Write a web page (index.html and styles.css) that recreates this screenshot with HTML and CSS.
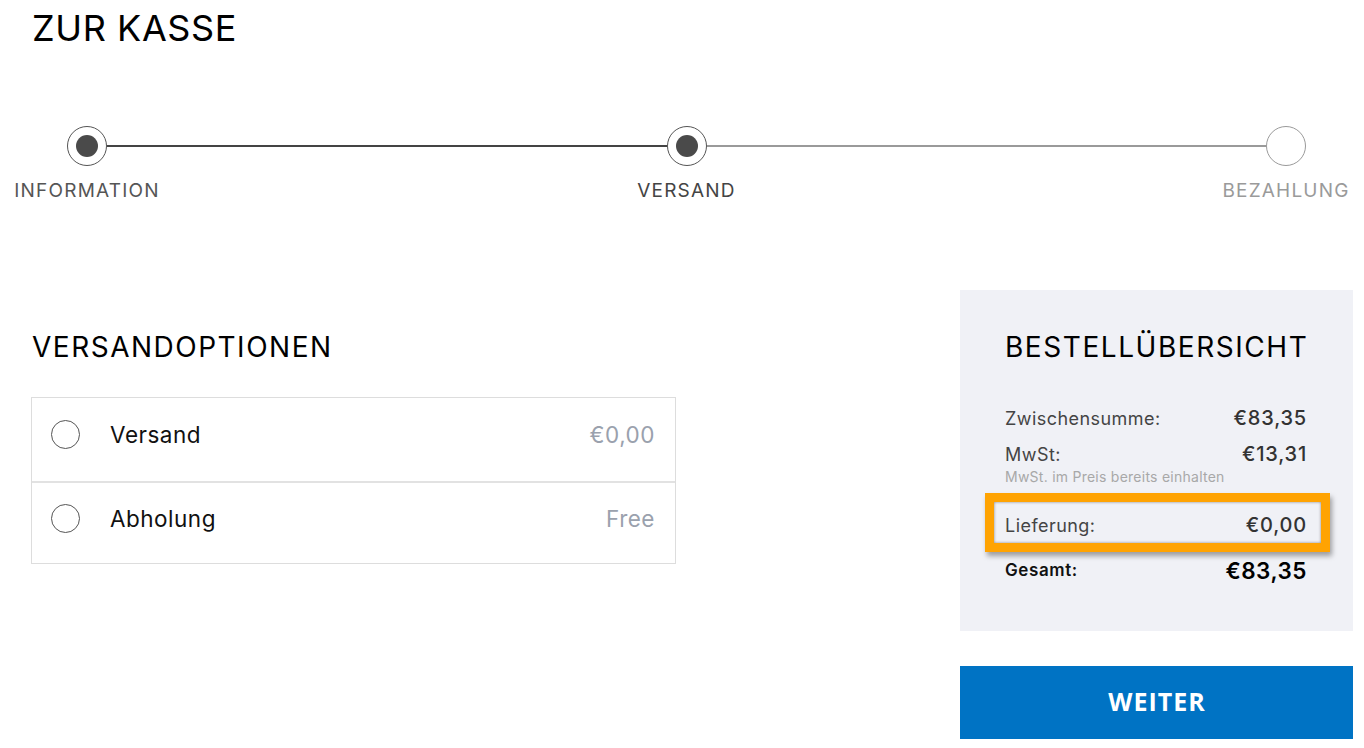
FILE: index.html
```html
<!DOCTYPE html>
<html lang="de">
<head>
<meta charset="utf-8">
<title>Zur Kasse</title>
<link rel="stylesheet" href="styles.css">
</head>
<body>
<h1 class="page-title">ZUR KASSE</h1>

<div class="stepper">
  <div class="track">
    <span class="dot done"></span>
    <span class="line dark"></span>
    <span class="dot done"></span>
    <span class="line light"></span>
    <span class="dot todo"></span>
  </div>
  <div class="labels">
    <span class="lbl">INFORMATION</span>
    <span class="lbl cur">VERSAND</span>
    <span class="lbl todo">BEZAHLUNG</span>
  </div>
</div>

<div class="main">
  <section class="options">
    <h2 class="section-title">VERSANDOPTIONEN</h2>
    <div class="opt-list">
      <div class="opt">
        <span class="radio"></span>
        <span class="opt-name">Versand</span>
        <span class="opt-price">€0,00</span>
      </div>
      <div class="opt">
        <span class="radio"></span>
        <span class="opt-name">Abholung</span>
        <span class="opt-price">Free</span>
      </div>
    </div>
  </section>

  <aside class="side">
    <div class="summary">
      <h2 class="summary-title">BESTELLÜBERSICHT</h2>
      <div class="rows">
        <div class="row"><span class="k">Zwischensumme:</span><span class="v">€83,35</span></div>
        <div class="row r2"><span class="k">MwSt:</span><span class="v">€13,31</span></div>
        <div class="note">MwSt. im Preis bereits einhalten</div>
        <div class="row r3 highlight"><span class="k">Lieferung:</span><span class="v">€0,00</span></div>
        <div class="row r4 total"><span class="k">Gesamt:</span><span class="v">€83,35</span></div>
      </div>
    </div>
    <button class="btn">WEITER</button>
  </aside>
</div>
</body>
</html>
```

FILE: styles.css
```css
* { box-sizing: border-box; }
html, body { margin: 0; padding: 0; background: #fff; }
body {
  font-family: "Inter", "Noto Sans", sans-serif;
  color: #111;
  width: 1364px;
  overflow: hidden;
}

.page-title {
  margin: 0;
  padding: 6px 0 0 32px;
  font-size: 36px;
  line-height: 44px;
  font-weight: 400;
  letter-spacing: 0.6px;
  color: #000;
}

/* stepper */
.stepper {
  margin: 76px 5px 0 14px;
}
.track {
  display: flex;
  align-items: center;
  padding: 0 53px;
}
.dot {
  width: 40px;
  height: 40px;
  flex: none;
  border: 1.5px solid #555;
  border-radius: 50%;
  display: grid;
  place-items: center;
  background: #fff;
}
.dot.done::after {
  content: "";
  width: 22px;
  height: 22px;
  border-radius: 50%;
  background: #4a4a4a;
}
.dot.todo { border-color: #9a9a9a; }
.line { flex: 1; height: 2px; }
.line.dark { background: #444; }
.line.light { background: #9a9a9a; }

.labels {
  display: flex;
  justify-content: space-between;
  margin-top: 13px;
}
.lbl {
  width: 146px;
  text-align: center;
  font-size: 19px;
  line-height: 24px;
  letter-spacing: 1.2px;
  color: #555;
}
.lbl.cur { color: #444; }
.lbl.todo { color: #9a9a9a; }

/* main */
.main {
  display: flex;
  margin-top: 87px;
}
.options {
  width: 645px;
  margin-left: 31px;
  padding-top: 40px;
}
.section-title {
  margin: 0 0 0 1px;
  font-size: 28px;
  line-height: 34px;
  font-weight: 400;
  letter-spacing: 1.5px;
  color: #000;
}
.opt-list {
  margin-top: 33px;
  border: 1px solid #ddd;
}
.opt {
  display: flex;
  align-items: center;
  height: 83px;
  padding: 0 20px 10px 19px;
}
.opt + .opt { border-top: 2px solid #e2e2e2; height: 82px; }
.radio {
  width: 29px;
  height: 29px;
  flex: none;
  border: 1.5px solid #555;
  border-radius: 50%;
}
.opt-name {
  margin-left: 30px;
  font-size: 22.5px;
  letter-spacing: 0.5px;
  color: #111;
  flex: 1;
}
.opt-price {
  font-size: 22.5px;
  letter-spacing: 0.5px;
  color: #9aa1ad;
}

/* summary */
.side {
  width: 393px;
  margin-left: auto;
  margin-right: 11px;
}
.summary {
  background: #f0f1f6;
  padding: 40px 46px 48px 45px;
}
.summary-title {
  margin: 0;
  font-size: 28px;
  line-height: 34px;
  font-weight: 400;
  letter-spacing: 1.55px;
  color: #000;
}
.rows { margin-top: 41px; }
.row {
  display: flex;
  justify-content: space-between;
  align-items: center;
  height: 26px;
}
.row .k {
  font-size: 18px;
  letter-spacing: 0.45px;
  color: #444;
}
.row .v {
  font-size: 20px;
  font-weight: 500;
  letter-spacing: 0.8px;
  color: #333;
}
.r2 { margin-top: 10px; }
.note {
  margin-top: 2px;
  font-size: 14px;
  line-height: 16px;
  letter-spacing: 0.25px;
  color: #a8a8a8;
}
.r3 { margin-top: 27px; }
.highlight { position: relative; }
.highlight::after {
  content: "";
  position: absolute;
  top: -19px;
  bottom: -14px;
  left: -20px;
  right: -23px;
  border: 9px solid #ffa302;
  box-shadow: 2px 4px 5px rgba(0, 0, 0, 0.35), inset 0 0 3px rgba(0, 0, 0, 0.45);
}
.r4 { margin-top: 19px; }
.total .k {
  font-size: 17px;
  font-weight: 600;
  letter-spacing: 0.6px;
  color: #111;
}
.total .v {
  font-size: 22.5px;
  font-weight: 600;
  letter-spacing: 0.5px;
  color: #000;
}

.btn {
  display: block;
  width: 100%;
  height: 73px;
  margin-top: 35px;
  border: 0;
  background: #0073c4;
  color: #fff;
  font-family: "Open Sans", "Liberation Sans", sans-serif;
  font-weight: 700;
  font-size: 25px;
  letter-spacing: 1px;
  padding: 0 0 3px 1px;
}
```
